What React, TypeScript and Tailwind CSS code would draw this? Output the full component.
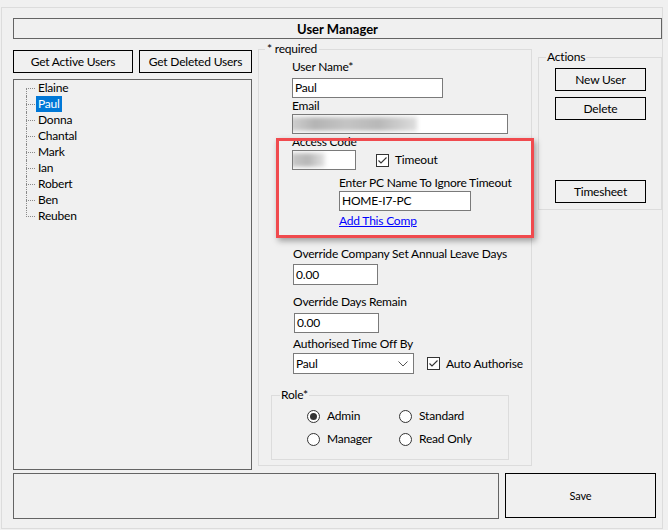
import React from "react";

const USERS = ["Elaine", "Paul", "Donna", "Chantal", "Mark", "Ian", "Robert", "Ben", "Reuben"];

function Check() {
  return (
    <svg width="13" height="13" viewBox="0 0 13 13" className="shrink-0">
      <rect x="0.5" y="0.5" width="12" height="12" fill="#fff" stroke="#333" />
      <polyline points="2.5,6.5 5,9 10.5,3.5" fill="none" stroke="#333" strokeWidth="1.1" />
    </svg>
  );
}

function Radio({ on, label }: { on?: boolean; label: string }) {
  return (
    <div className="flex h-[16px] items-center gap-[7px]">
      <svg width="13" height="13" viewBox="0 0 13 13" className="shrink-0">
        <circle cx="6.5" cy="6.5" r="6" fill="#fff" stroke="#333" />
        {on && <circle cx="6.5" cy="6.5" r="3.5" fill="#333" />}
      </svg>
      <span>{label}</span>
    </div>
  );
}

function Btn({ w, label }: { w: string; label: string }) {
  return (
    <div className={`${w} flex h-[23px] items-center justify-center border border-black`}>{label}</div>
  );
}

export default function App() {
  return (
    <div className="relative h-[530px] w-[668px] overflow-hidden bg-[#f0f0f0] font-['Lato',sans-serif] text-[12px] leading-[16px] tracking-[-0.2px] text-black">
      <div className="ml-px mt-[7px] h-[522px] w-[662px] border border-[#dcdcdc] pl-[11px] pt-[10px]">
        {/* title */}
        <div className="flex h-[21px] w-[649px] items-center justify-center border border-[#646464] text-[13px] font-bold tracking-normal">
          User Manager
        </div>

        <div className="flex items-start">
          {/* users */}
          <div className="mt-[11px] w-[239px]">
            <div className="flex gap-[6px]">
              <Btn w="w-[120px]" label="Get Active Users" />
              <Btn w="w-[113px]" label="Get Deleted Users" />
            </div>
            <div className="mt-[6px] h-[391px] w-[239px] border border-[#646464] pl-[12px]">
              {USERS.map((u, i) => (
                <div key={u} className="flex h-[16px] items-center">
                  <div className="relative h-full w-[10px]">
                    <div
                      className={`absolute left-0 border-l border-dotted border-[#8a8a8a] ${
                        i === 0 ? "top-[8px] bottom-0" : i === USERS.length - 1 ? "top-0 h-[9px]" : "top-0 bottom-0"
                      }`}
                    />
                    <div className="absolute left-0 top-[8px] w-[9px] border-t border-dotted border-[#8a8a8a]" />
                  </div>
                  <span className={`px-[2px] ${u === "Paul" ? "bg-[#0078d7] text-white" : ""}`}>{u}</span>
                </div>
              ))}
            </div>
          </div>

          {/* details */}
          <fieldset className="ml-[6px] mt-[2px] h-[425px] w-[274px] border border-[#dcdcdc] pl-[33px]">
            <legend className="ml-[-27px] px-[2px]">* required</legend>
            <div className="mt-[2px]">User Name*</div>
            <div className="mt-[3px] h-[20px] w-[151px] border border-[#7a7a7a] bg-white px-[2px] leading-[18px]">Paul</div>
            <div>Email</div>
            <div className="h-[20px] w-[216px] overflow-hidden border border-[#7a7a7a] bg-white">
              <div className="ml-[-4px] mt-[2px] h-[14px] w-[128px] bg-[linear-gradient(90deg,#d2d2d2_0%,#b4b4b4_20%,#c4c4c4_45%,#b8b8b8_70%,#dedede_100%)] blur-[2px]" />
            </div>
            <div>Access Code</div>
            <div className="flex h-[20px] items-center">
              <div className="h-[20px] w-[64px] overflow-hidden border border-[#7a7a7a] bg-white">
                <div className="ml-[-2px] mt-[2px] h-[14px] w-[34px] bg-[linear-gradient(90deg,#c8c8c8_0%,#b6b6b6_50%,#e4e4e4_100%)] blur-[2px]" />
              </div>
              <div className="ml-[20px] flex items-center gap-[6px]">
                <Check />
                <span>Timeout</span>
              </div>
            </div>
            <div className="ml-[47px] mt-[5px]">Enter PC Name To Ignore Timeout</div>
            <div className="ml-[47px] h-[20px] w-[132px] border border-[#7a7a7a] bg-white px-[2px] leading-[18px]">HOME-I7-PC</div>
            <div className="ml-[47px] mt-[2px] text-[#0000ff] underline">Add This Comp</div>

            <div className="ml-px mt-[17px]">Override Company Set Annual Leave Days</div>
            <div className="ml-px mt-[2px] h-[21px] w-[85px] border border-[#7a7a7a] bg-white px-[2px] leading-[19px]">0.00</div>
            <div className="ml-px mt-[9px]">Override Days Remain</div>
            <div className="ml-[2px] mt-[3px] h-[20px] w-[85px] border border-[#7a7a7a] bg-white px-[2px] leading-[18px]">0.00</div>
            <div className="ml-px mt-[3px]">Authorised Time Off By</div>
            <div className="ml-px mt-px flex h-[21px] items-center">
              <div className="flex h-[21px] w-[121px] items-center justify-between border border-[#7a7a7a] bg-white pl-[2px] pr-[5px]">
                <span>Paul</span>
                <svg width="10" height="6" viewBox="0 0 10 6">
                  <polyline points="0.5,0.5 5,5 9.5,0.5" fill="none" stroke="#555" strokeWidth="1" />
                </svg>
              </div>
              <div className="ml-[13px] flex items-center gap-[6px]">
                <Check />
                <span>Auto Authorise</span>
              </div>
            </div>

            <fieldset className="ml-[-21px] mt-[13px] h-[73px] w-[238px] border border-[#dcdcdc] pl-[35px]">
              <legend className="ml-[-27px] px-[1px]">Role*</legend>
              <div className="mt-[5px] grid grid-cols-[92px_1fr] gap-y-[7px]">
                <Radio on label="Admin" />
                <Radio label="Standard" />
                <Radio label="Manager" />
                <Radio label="Read Only" />
              </div>
            </fieldset>
          </fieldset>

          {/* actions */}
          <fieldset className="ml-[6px] mt-[10px] h-[161px] w-[124px] border border-[#dcdcdc] pl-[16px]">
            <legend className="ml-[-9px] px-[1px]">Actions</legend>
            <div className="mt-[3px]">
              <Btn w="w-[91px]" label="New User" />
            </div>
            <div className="mt-[6px]">
              <Btn w="w-[91px]" label="Delete" />
            </div>
            <div className="mt-[60px]">
              <Btn w="w-[91px]" label="Timesheet" />
            </div>
          </fieldset>
        </div>

        {/* footer */}
        <div className="mt-[3px] flex items-start gap-[6px]">
          <div className="h-[46px] w-[486px] border border-[#646464]" />
          <div className="flex h-[45px] w-[151px] items-center justify-center border border-black text-[11px]">Save</div>
        </div>
      </div>

      {/* annotation */}
      <div className="absolute left-[276px] top-[138px] h-[100px] w-[258px] border-[3px] border-[#f04a4e] shadow-[2px_3px_6px_rgba(0,0,0,0.35)]" />
    </div>
  );
}
